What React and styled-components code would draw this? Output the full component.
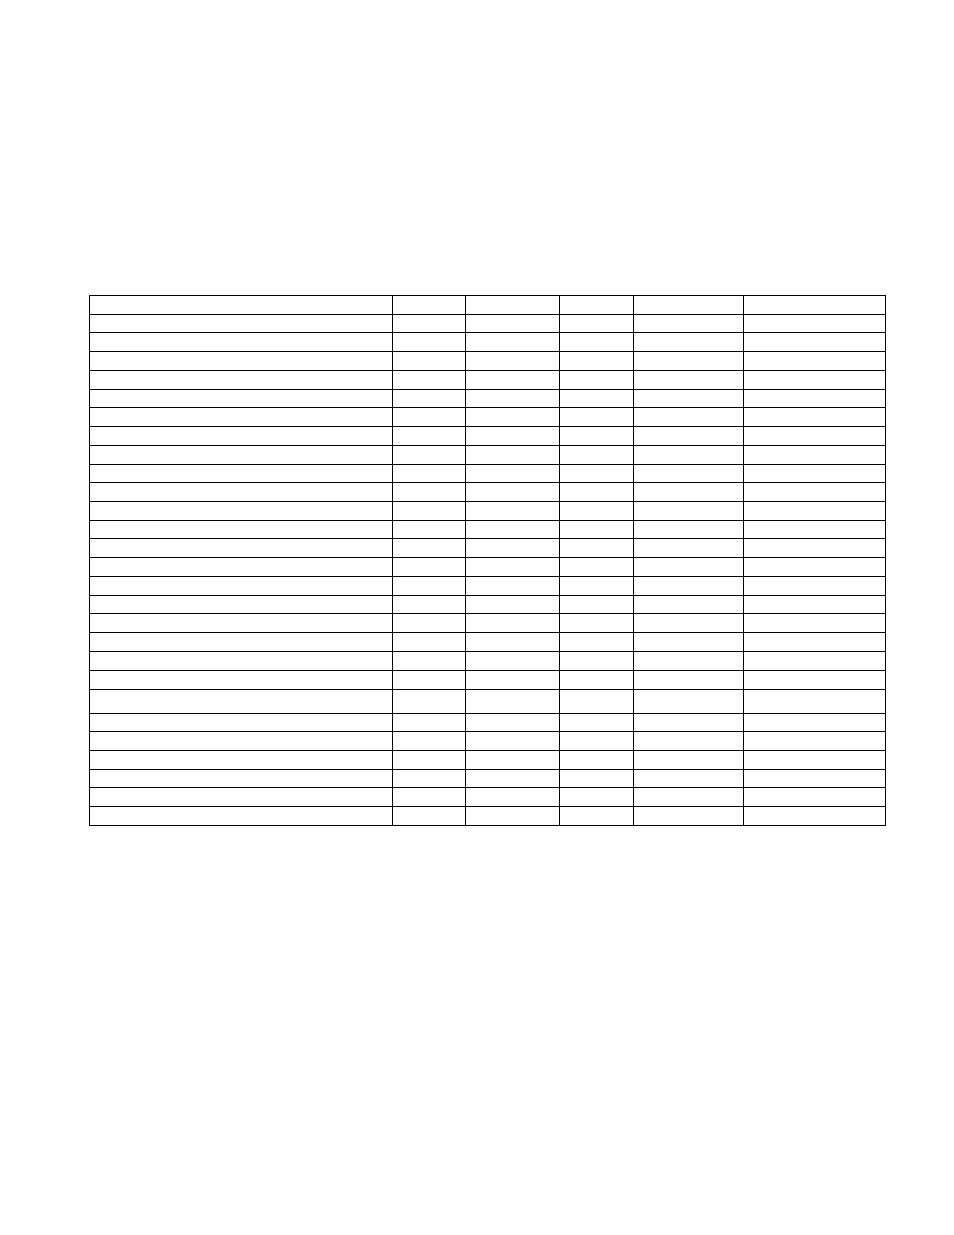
import React from "react";
import styled, { createGlobalStyle } from "styled-components";

const GlobalStyle = createGlobalStyle`
  html, body {
    margin: 0;
    padding: 0;
    background: #ffffff;
    font-family: "Liberation Sans", Arial, sans-serif;
  }
`;

// pixel width of every column (cell + its right rule)
const columns = [303, 73, 94, 74, 110, 142];

// height of each row (cell + its bottom rule)
const rows = [
  19, 18, 19, 19, 19, 18, 19, 19, 19, 18, 19, 19, 18, 19, 19, 19, 18, 19, 19,
  19, 19, 24, 18, 19, 19, 18, 19, 19,
];

function App() {
  return (
    <Page>
      <GlobalStyle />
      <Sheet>
        <colgroup>
          {columns.map((w, i) => (
            <Col key={i} $w={w} />
          ))}
        </colgroup>
        <tbody>
          {rows.map((h, r) => (
            <Row key={r} $h={h}>
              {columns.map((_, c) => (
                <Cell key={c} $h={h} />
              ))}
            </Row>
          ))}
        </tbody>
      </Sheet>
    </Page>
  );
}

export default App;

const Page = styled.div`
  width: 954px;
  min-height: 1235px;
  padding: 295px 0 0 89px;
  box-sizing: border-box;
`;

const Sheet = styled.table`
  border-collapse: separate;
  border-spacing: 0;
  table-layout: fixed;
  width: 797px;
  border-left: 1px solid #000;
  border-top: 1px solid #000;
`;

const Col = styled.col`
  width: ${(p) => p.$w}px;
`;

const Row = styled.tr`
  height: ${(p) => p.$h}px;
`;

const Cell = styled.td`
  box-sizing: border-box;
  height: ${(p) => p.$h}px;
  padding: 0;
  border-right: 1px solid #000;
  border-bottom: 1px solid #000;
  font-size: 10px;
  line-height: 1;
`;
